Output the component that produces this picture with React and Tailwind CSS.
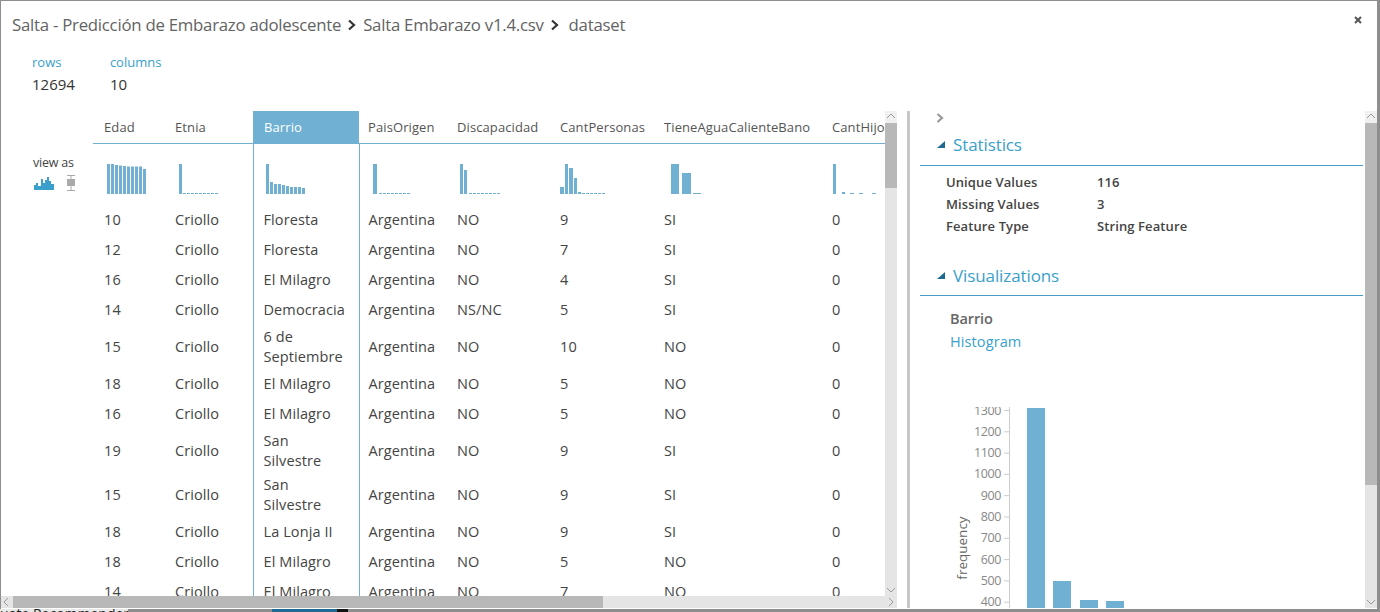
const FUENTE = { fontFamily: '"Open Sans", "Noto Sans", sans-serif' };

const filas = [
  ['10', 'Criollo', 'Floresta', 'Argentina', 'NO', '9', 'SI', '0'],
  ['12', 'Criollo', 'Floresta', 'Argentina', 'NO', '7', 'SI', '0'],
  ['16', 'Criollo', 'El Milagro', 'Argentina', 'NO', '4', 'SI', '0'],
  ['14', 'Criollo', 'Democracia', 'Argentina', 'NS/NC', '5', 'SI', '0'],
  ['15', 'Criollo', '6 de\nSeptiembre', 'Argentina', 'NO', '10', 'NO', '0'],
  ['18', 'Criollo', 'El Milagro', 'Argentina', 'NO', '5', 'NO', '0'],
  ['16', 'Criollo', 'El Milagro', 'Argentina', 'NO', '5', 'NO', '0'],
  ['19', 'Criollo', 'San\nSilvestre', 'Argentina', 'NO', '9', 'SI', '0'],
  ['15', 'Criollo', 'San\nSilvestre', 'Argentina', 'NO', '9', 'SI', '0'],
  ['18', 'Criollo', 'La Lonja II', 'Argentina', 'NO', '9', 'SI', '0'],
  ['18', 'Criollo', 'El Milagro', 'Argentina', 'NO', '5', 'NO', '0'],
  ['14', 'Criollo', 'El Milagro', 'Argentina', 'NO', '7', 'NO', '0'],
];

// [x, ancho, alto] relativos a cada mini histograma de 60px de alto
const barras = (inicio, paso, ancho, alturas) => alturas.map((h, i) => [inicio + i * paso, ancho, h]);
const guiones = (inicio, fin) => {
  const out = [];
  for (let x = inicio; x < fin; x += 4) out.push([x, 3, 1]);
  return out;
};

const columnas = [
  { nombre: 'Edad', ancho: 73, barras: barras(14, 4, 3, [30, 30, 29, 28.5, 28, 27.5, 27.5, 27.5, 27.5, 25]) },
  { nombre: 'Etnia', ancho: 87, barras: [[13, 3, 30], ...guiones(17, 50)] },
  { nombre: 'Barrio', ancho: 106, barras: [[12, 3, 30], ...barras(16, 4, 3, [12, 10, 10, 9, 8, 7, 7, 7, 6])] },
  { nombre: 'PaisOrigen', ancho: 89, barras: [[13, 4, 30], ...guiones(19, 50)] },
  { nombre: 'Discapacidad', ancho: 103, barras: [[12, 3, 30], [16, 3, 24], ...guiones(21, 50)] },
  { nombre: 'CantPersonas', ancho: 104, barras: [[9, 4, 7], [14, 3, 30], [18, 4, 26], [23, 3, 16], [27, 3, 2], ...guiones(31, 52)] },
  { nombre: 'TieneAguaCalienteBano', ancho: 168, barras: [[16, 8, 30], [27, 9, 21], [38, 8, 1]] },
  { nombre: 'CantHijos', ancho: 90, barras: [[10, 3, 30], [19, 3, 2], [27, 4, 1], [36, 4, 1], [49, 4, 1]] },
];

function MiniHist({ barras }) {
  return (
    <svg width="62" height="60" className="block">
      {barras.map(([x, w, h], i) => (
        <rect key={i} x={x} y={50 - h} width={w} height={h} fill="#70b1d3" />
      ))}
    </svg>
  );
}

function Flecha({ dir, className = '' }) {
  const puntos = {
    up: '2,7 6,3 10,7',
    down: '2,4 6,8 10,4',
    left: '7,2 3,6 7,10',
    right: '4,2 8,6 4,10',
  }[dir];
  return (
    <svg width="12" height="12" className={`block ${className}`}>
      <polyline points={puntos} fill="none" stroke="#9a9a9a" strokeWidth="1" />
    </svg>
  );
}

function Separador() {
  return (
    <svg width="10" height="12" className="mx-[6px] inline-block">
      <polyline points="2,1.5 7,6 2,10.5" fill="none" stroke="#333" strokeWidth="2.2" />
    </svg>
  );
}

function Triangulo() {
  return (
    <svg width="8" height="8" className="block">
      <polygon points="8,0 8,7 0,7" fill="#1f6a92" />
    </svg>
  );
}

function Seccion({ titulo, className = '' }) {
  return (
    <div className={`flex h-[41px] items-center gap-[8px] border-b border-[#4a9cc6] pl-[17px] ${className}`}>
      <Triangulo />
      <span className="text-[17px] text-[#3a9fcc] tracking-[-0.1px]">{titulo}</span>
    </div>
  );
}

function Histograma() {
  const marcas = [1300, 1200, 1100, 1000, 900, 800, 700, 600, 500, 400];
  return (
    <svg width="200" height="203" className="block ml-[30px] mt-[53px]">
      <text x="17" y="141" transform="rotate(-90 17 141)" textAnchor="middle" fontSize="13.5" fill="#666" style={FUENTE}>
        frequency
      </text>
      <line x1="59.5" y1="0" x2="59.5" y2="203" stroke="#ccc" />
      {marcas.map((m, i) => {
        const y = 3.5 + i * 21.3;
        return (
          <g key={m}>
            <line x1="54" x2="59" y1={y} y2={y} stroke="#ccc" />
            <text x="51" y={y + 4} textAnchor="end" fontSize="12.5" fill="#888" letterSpacing="-0.4" style={FUENTE}>{m}</text>
          </g>
        );
      })}
      <rect x="77" y="1" width="18" height="202" fill="#70b1d3" />
      <rect x="103" y="174" width="18" height="29" fill="#70b1d3" />
      <rect x="130" y="193" width="18" height="10" fill="#70b1d3" />
      <rect x="156" y="194" width="18" height="9" fill="#70b1d3" />
    </svg>
  );
}

export default function App() {
  return (
    <div style={FUENTE} className="h-[612px] w-[1380px] overflow-hidden bg-[#8e8e8e] pt-px">
      <div className="relative ml-px flex h-[608px] w-[1376px] flex-col bg-white pb-px">
        {/* encabezado */}
        <div className="flex h-[48px] items-center pl-[11px] text-[16.8px] text-[#636363] tracking-[-0.25px]">
          <span>Salta - Predicción de Embarazo adolescente</span>
          <Separador />
          <span>Salta Embarazo v1.4.csv</span>
          <Separador />
          <span className="ml-[3px]">dataset</span>
        </div>
        <button className="absolute right-[15px] top-[15px]">
          <svg width="8" height="8" className="block">
            <path d="M1 1L7 7M7 1L1 7" stroke="#555" strokeWidth="2" />
          </svg>
        </button>

        <div className="flex h-[62px] gap-[35px] pl-[31px] pt-[5px]">
          <div>
            <div className="text-[13px] leading-[17px] text-[#3a9fcc]">rows</div>
            <div className="mt-[3px] text-[15px] leading-[20px] text-[#333]">12694</div>
          </div>
          <div>
            <div className="text-[13px] leading-[17px] text-[#3a9fcc]">columns</div>
            <div className="mt-[3px] text-[15px] leading-[20px] text-[#333]">10</div>
          </div>
        </div>

        {/* cuerpo */}
        <div className="flex min-h-0 flex-1">
          <div className="flex w-[896px] flex-col">
            <div className="flex min-h-0 flex-1">
              <div className="w-[92px] shrink-0 pl-[32px] pt-[44px]">
                <div className="text-[12.5px] leading-[16px] text-[#444] tracking-[-0.2px]">view as</div>
                <div className="ml-px mt-[4px] flex items-start gap-[13px]">
                  <svg width="20" height="15" className="block">
                    <path d="M0 15V10H2V8H4V11H7V4H9V8H11V5H13V2H15V6H17V9H20V15Z" fill="#3a9fcc" />
                  </svg>
                  <svg width="8" height="16" className="block">
                    <path d="M0 .5H8M0 15.5H8M4 0V16" stroke="#aaa" />
                    <rect x="0" y="4" width="8" height="7" fill="#aaa" />
                  </svg>
                </div>
              </div>

              <div className="min-w-0 flex-1 overflow-hidden">
                <table className="w-[820px] table-fixed border-collapse">
                  <colgroup>
                    {columnas.map(c => <col key={c.nombre} style={{ width: c.ancho }} />)}
                  </colgroup>
                  <thead>
                    <tr className="h-[32px] border-b border-[#70b1d3]">
                      {columnas.map((c, i) => (
                        <th
                          key={c.nombre}
                          className={`whitespace-nowrap pt-[2px] text-left text-[13px] font-normal tracking-[0.1px] ${i === 0 ? 'pl-[11px]' : 'pl-[9px]'} ${i === 2 ? 'bg-[#70b1d3] pl-[11px] text-white' : 'text-[#555]'}`}
                        >
                          {c.nombre}
                        </th>
                      ))}
                    </tr>
                    <tr className="h-[62px]">
                      {columnas.map((c, i) => (
                        <td key={c.nombre} className={`p-0 align-top ${i === 2 ? 'border-x border-[#70b1d3]' : ''}`}>
                          <MiniHist barras={c.barras} />
                        </td>
                      ))}
                    </tr>
                  </thead>
                  <tbody>
                    {filas.map((fila, n) => (
                      <tr key={n} className={fila[2].includes('\n') ? 'h-[44px]' : 'h-[30px]'}>
                        {fila.map((valor, i) => (
                          <td
                            key={i}
                            className={`whitespace-pre-line py-0 text-[14.5px] leading-[20px] tracking-[0.1px] text-[#444] ${i === 0 ? 'pl-[11px]' : 'pl-[9px]'} ${i === 2 ? 'border-x border-[#70b1d3] pl-[10px]' : ''}`}
                          >
                            {valor}
                          </td>
                        ))}
                      </tr>
                    ))}
                  </tbody>
                </table>
              </div>

              {/* scroll vertical de la tabla */}
              <div className="flex w-[12px] shrink-0 flex-col bg-[#e5e5e5]">
                <Flecha dir="up" className="bg-[#f0f0f0]" />
                <div className="h-[65px] bg-[#b8b8b8]" />
                <div className="flex-1" />
                <Flecha dir="down" />
              </div>
            </div>

            {/* scroll horizontal */}
            <div className="flex h-[12px] shrink-0 bg-[#e5e5e5]">
              <Flecha dir="left" />
              <div className="w-[590px] bg-[#b8b8b8]" />
              <div className="flex-1" />
              <Flecha dir="right" />
            </div>
          </div>

          <div className="ml-[10px] w-[3px] shrink-0 bg-[#c8c8c8]" />

          {/* panel derecho */}
          <div className="min-w-0 flex-1 overflow-hidden pl-[10px] pr-[2px]">
            <svg width="8" height="10" className="ml-[16px] mt-[2px] block">
              <polyline points="1.5,1 6,5 1.5,9" fill="none" stroke="#9a9a9a" strokeWidth="2.2" />
            </svg>
            <Seccion titulo="Statistics" className="mt-[2px]" />
            <div className="pl-[26px] pt-[6px] text-[13px] font-semibold tracking-[0.1px] text-[#444]">
              {[['Unique Values', '116'], ['Missing Values', '3'], ['Feature Type', 'String Feature']].map(([k, v]) => (
                <div key={k} className="flex h-[22px] items-center">
                  <span className="w-[151px]">{k}</span>
                  <span>{v}</span>
                </div>
              ))}
            </div>
            <Seccion titulo="Visualizations" className="mt-[17px] pt-[1px]" />
            <div className="pl-[30px] pt-[12px]">
              <div className="text-[14.5px] font-semibold leading-[22px] tracking-[-0.1px] text-[#666]">Barrio</div>
              <div className="text-[14.5px] leading-[24px] tracking-[0.1px] text-[#3a9fcc]">Histogram</div>
            </div>
            <Histograma />
          </div>

          <div className="flex w-[12px] shrink-0 flex-col bg-[#e5e5e5]">
            <Flecha dir="up" className="bg-[#f0f0f0]" />
            <div className="h-[362px] bg-[#b8b8b8]" />
            <div className="flex-1" />
            <Flecha dir="down" />
          </div>
        </div>
      </div>

      {/* lo que asoma de la página de atrás */}
      <div className="flex h-[3px] overflow-hidden">
        <div className="w-[128px] shrink-0 overflow-hidden bg-[#e8e8e8]">
          <div className="-ml-[26px] -mt-[5px] whitespace-nowrap text-[14px] leading-[20px] text-[#222]">Evaluate Recommender</div>
        </div>
        <div className="ml-[144px] w-[65px] shrink-0 bg-[#1f6a92]" />
        <div className="w-[11px] shrink-0 bg-[#111]" />
      </div>
    </div>
  );
}
